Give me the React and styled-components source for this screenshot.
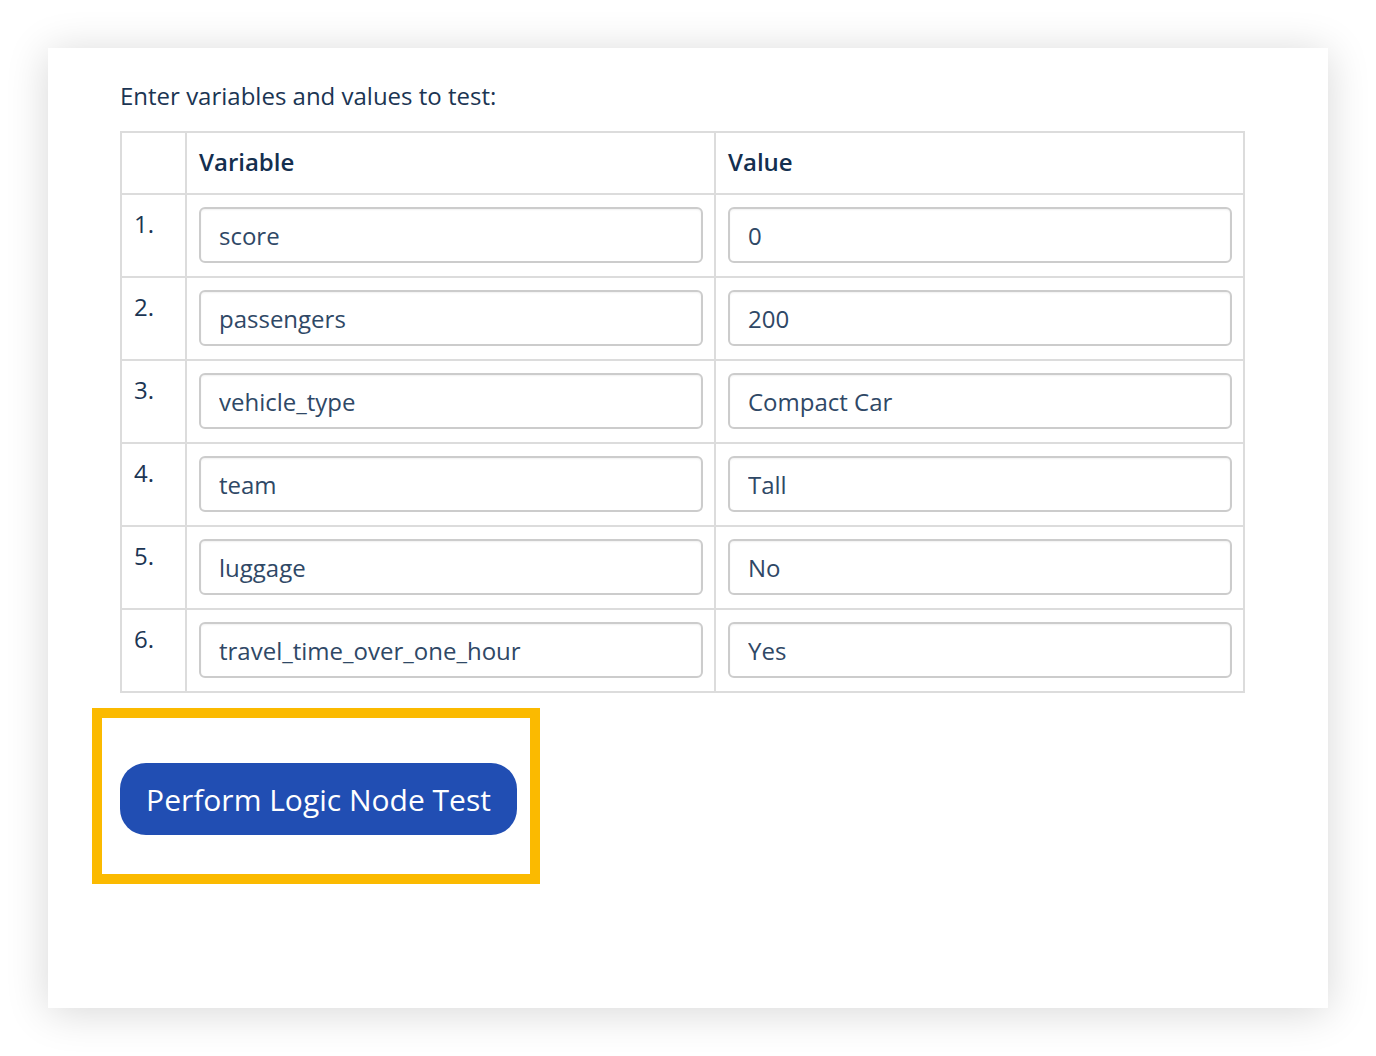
import React from "react";
import styled, { createGlobalStyle } from "styled-components";

const Global = createGlobalStyle`
  html, body { margin: 0; padding: 0; background: #ffffff; }
  body { font-family: "Open Sans", "Noto Sans", sans-serif; }
  * { box-sizing: border-box; }
`;

const Page = styled.div`
  padding: 48px;
  width: 1376px;
`;

const Card = styled.section`
  width: 1280px;
  height: 960px;
  background: #ffffff;
  box-shadow: 0 4px 40px rgba(0, 0, 0, 0.16);
  padding: 30px 84px 0 72px;
`;

const Intro = styled.p`
  margin: 0 0 17px;
  font-size: 24px;
  line-height: 36px;
  color: #1b3553;
`;

const Table = styled.table`
  width: 1123px;
  border-collapse: collapse;
  table-layout: fixed;
  border: 2px solid #dcdcdc;
`;

const HeadCell = styled.th`
  border: 2px solid #dcdcdc;
  text-align: left;
  font-weight: 600;
  font-size: 24px;
  line-height: 36px;
  color: #142f4f;
  padding: 11px 12px 13px;
  vertical-align: middle;
`;

const NumCell = styled.td`
  border: 2px solid #dcdcdc;
  vertical-align: top;
  font-size: 24px;
  line-height: 36px;
  color: #1b3553;
  padding: 11px 13px 9px 12px;
`;

const InputCell = styled.td`
  border: 2px solid #dcdcdc;
  vertical-align: top;
  padding: 12px 11px 13px 12px;
`;

const Field = styled.input`
  display: block;
  width: 100%;
  height: 56px;
  border: 2px solid #cccccc;
  border-radius: 6px;
  box-shadow: inset 0 1px 2px rgba(0, 0, 0, 0.06);
  padding: 0 18px;
  font-family: "Open Sans", "Noto Sans", sans-serif;
  font-size: 24px;
  color: #2f4866;
  background: #ffffff;
  outline: none;
`;

const ActionArea = styled.div`
  position: relative;
  margin-top: 70px;
  width: 397px;
`;

const Highlight = styled.div`
  position: absolute;
  left: -28px;
  top: -55px;
  right: -23px;
  bottom: -49px;
  border: 10px solid #fbba00;
  pointer-events: none;
`;

const Button = styled.button`
  display: block;
  width: 397px;
  height: 72px;
  border: none;
  border-radius: 26px;
  background: #214eb3;
  color: #ffffff;
  font-family: "Open Sans", "Noto Sans", sans-serif;
  font-size: 30px;
  padding: 0;
  cursor: pointer;
`;

const rows = [
  ["score", "0"],
  ["passengers", "200"],
  ["vehicle_type", "Compact Car"],
  ["team", "Tall"],
  ["luggage", "No"],
  ["travel_time_over_one_hour", "Yes"],
];

export default function App() {
  return (
    <Page>
      <Global />
      <Card>
        <Intro>Enter variables and values to test:</Intro>
        <Table>
          <colgroup>
            <col style={{ width: 65 }} />
            <col style={{ width: 529 }} />
            <col style={{ width: 529 }} />
          </colgroup>
          <thead>
            <tr>
              <HeadCell />
              <HeadCell>Variable</HeadCell>
              <HeadCell>Value</HeadCell>
            </tr>
          </thead>
          <tbody>
            {rows.map(([name, value], i) => (
              <tr key={name}>
                <NumCell>{i + 1}.</NumCell>
                <InputCell>
                  <Field defaultValue={name} />
                </InputCell>
                <InputCell>
                  <Field defaultValue={value} />
                </InputCell>
              </tr>
            ))}
          </tbody>
        </Table>
        <ActionArea>
          <Highlight />
          <Button>Perform Logic Node Test</Button>
        </ActionArea>
      </Card>
    </Page>
  );
}
